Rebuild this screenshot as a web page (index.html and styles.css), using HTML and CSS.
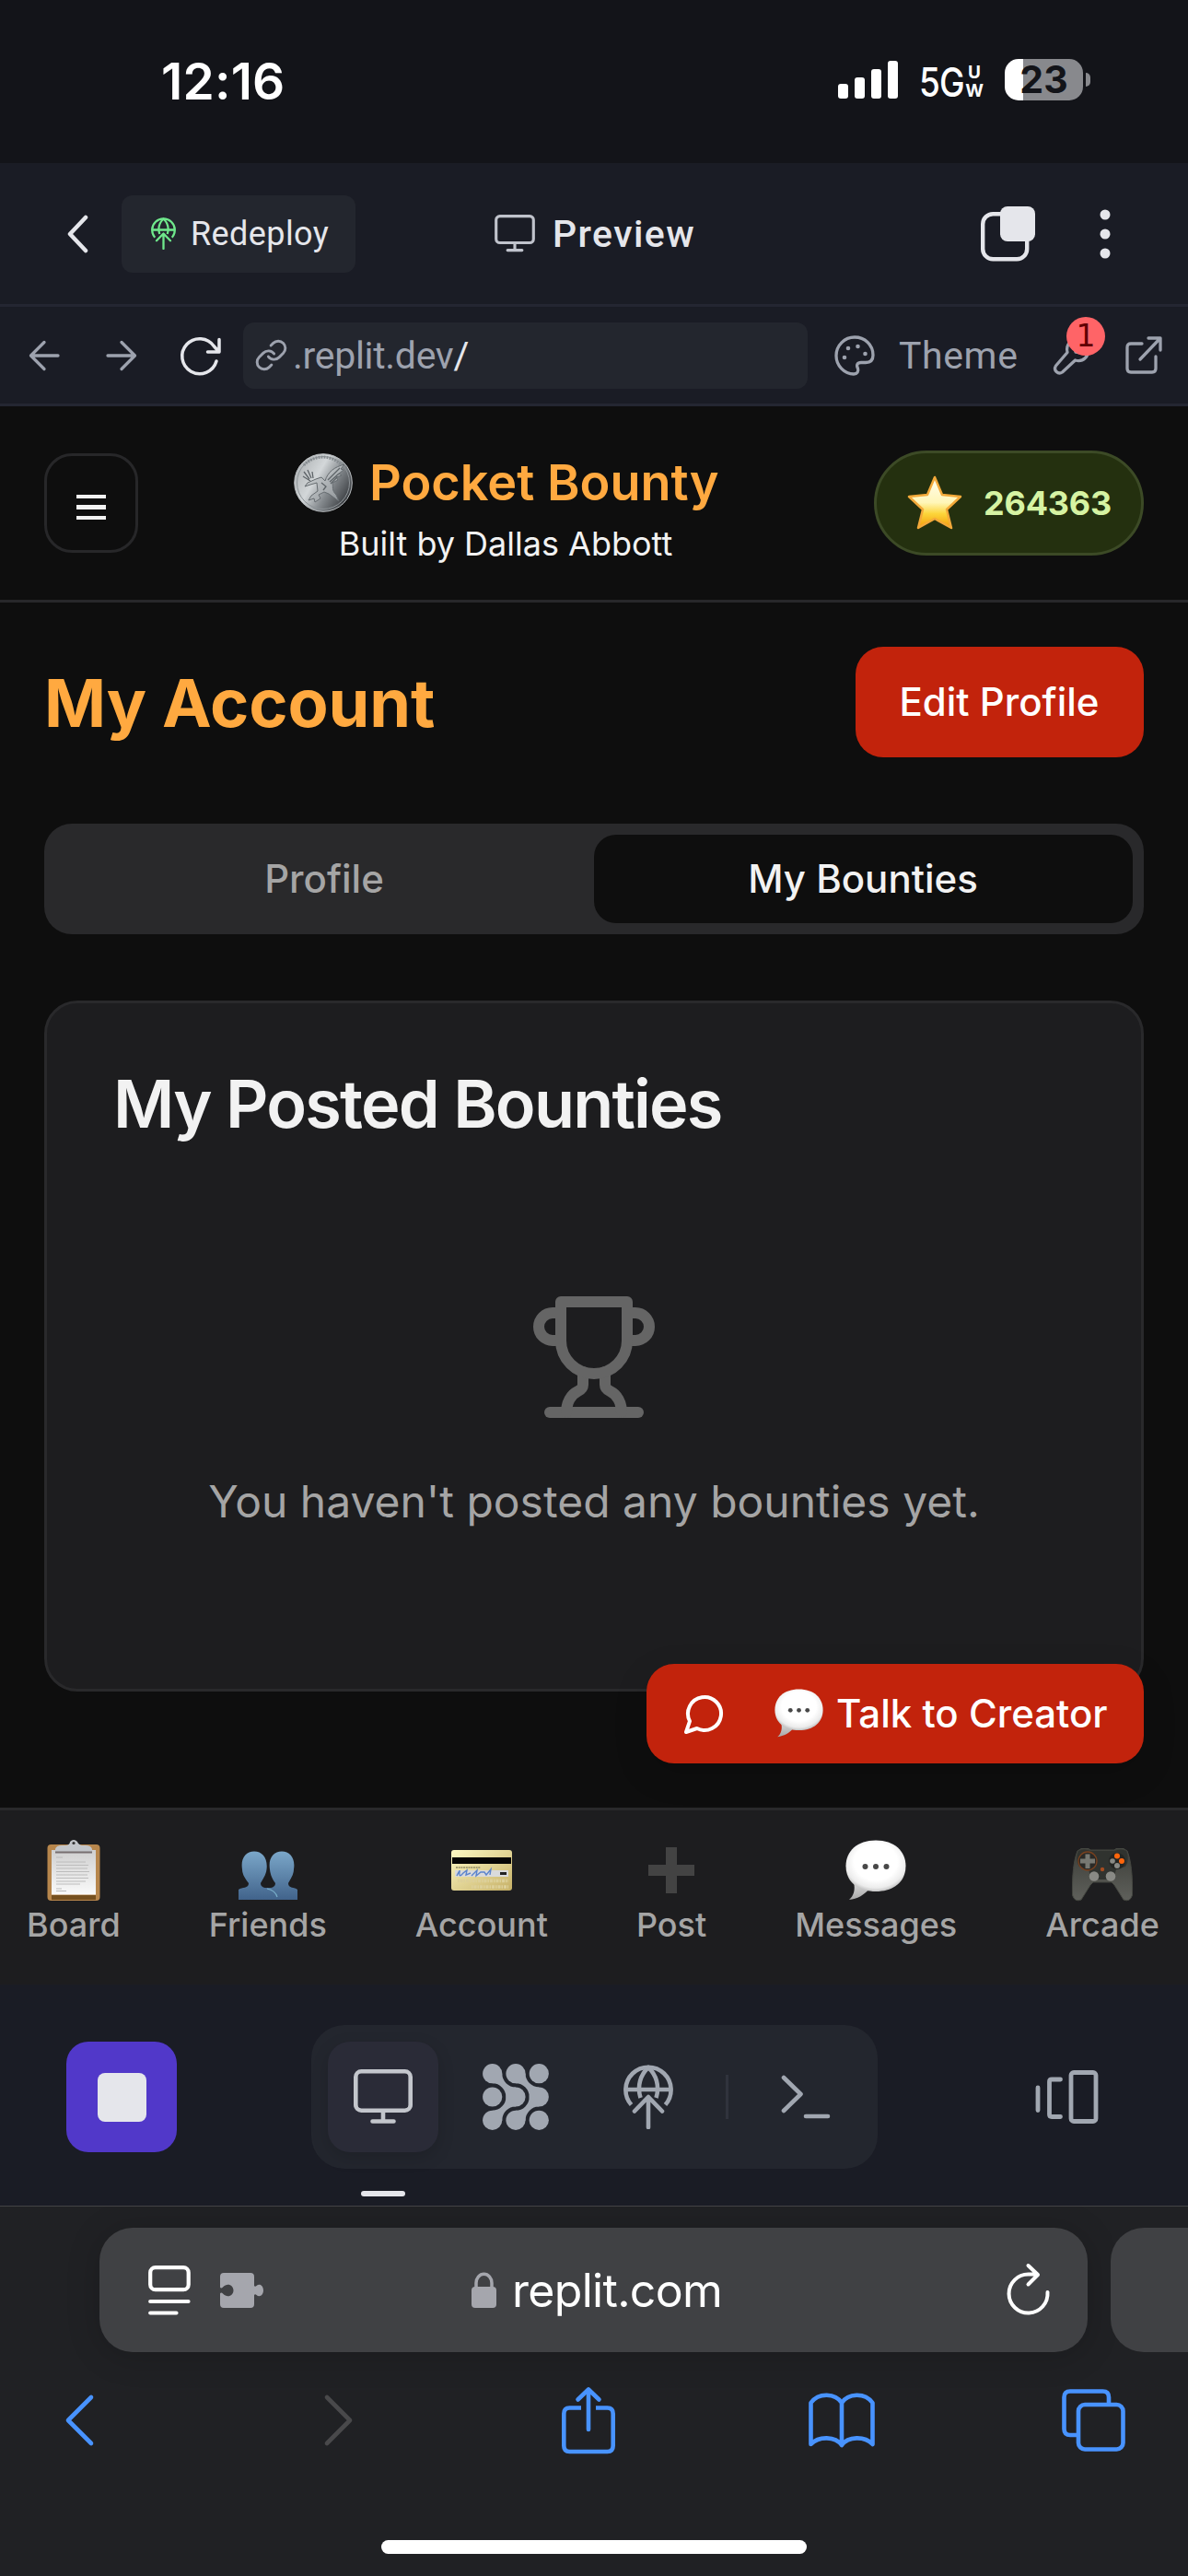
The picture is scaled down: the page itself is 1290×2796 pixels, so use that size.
FILE: index.html
```html
<!DOCTYPE html>
<html lang="en">
<head>
<meta charset="utf-8">
<title>Pocket Bounty</title>
<link rel="stylesheet" href="styles.css">
</head>
<body>
<svg class="defs" width="0" height="0" aria-hidden="true">
  <defs>
    <radialGradient id="bubbleFill" cx="50%" cy="42%" r="60%">
      <stop offset="0.6" stop-color="#fff"/><stop offset="0.85" stop-color="#ececec"/><stop offset="1" stop-color="#b9b9b9"/>
    </radialGradient>
    <linearGradient id="tailFill" x1="0" y1="0" x2="0" y2="1"><stop offset="0" stop-color="#d8d8d8"/><stop offset="1" stop-color="#a8a8a8"/></linearGradient>
    <linearGradient id="starFill" x1="0" y1="0" x2="0" y2="1"><stop offset="0" stop-color="#fffdf0"/><stop offset="0.5" stop-color="#fff6b8"/><stop offset="0.72" stop-color="#fcd53a"/><stop offset="1" stop-color="#f39a0b"/></linearGradient>
    <linearGradient id="coinFill" x1="0.1" y1="0.2" x2="0.95" y2="0.7"><stop offset="0" stop-color="#b4b8ba"/><stop offset="0.35" stop-color="#d3d7d9"/><stop offset="0.65" stop-color="#858a8e"/><stop offset="1" stop-color="#3e4145"/></linearGradient>
    <linearGradient id="eagleFill" x1="0" y1="0" x2="1" y2="1"><stop offset="0" stop-color="#d5d9db"/><stop offset="1" stop-color="#8c9195"/></linearGradient>
    <linearGradient id="peopleFill" x1="0" y1="0" x2="0" y2="1"><stop offset="0" stop-color="#7ba7c9"/><stop offset="1" stop-color="#41638b"/></linearGradient>
    <linearGradient id="paperFill" x1="0" y1="0" x2="0" y2="1"><stop offset="0" stop-color="#cfcfcf"/><stop offset="1" stop-color="#fafafa"/></linearGradient>
    <linearGradient id="cardFill" x1="0" y1="0" x2="1" y2="1"><stop offset="0" stop-color="#fdf9c4"/><stop offset="1" stop-color="#c6b066"/></linearGradient>
    <linearGradient id="padFill" x1="0" y1="0" x2="0" y2="1"><stop offset="0" stop-color="#3c3e39"/><stop offset="1" stop-color="#5f605b"/></linearGradient>
  </defs>
  <symbol id="globe-up" viewBox="0 0 54 70">
    <g fill="none" stroke="currentColor" stroke-width="4.6" stroke-linejoin="round">
      <path d="M8.5 43.5A24.6 24.6 0 1 1 45.5 43.5"/>
      <path d="M2.5 27H51.5M18.5 36C14.5 23 18.5 11 27 3C35.500 11 39.500 23 35.500 36"/>
      <path stroke-linecap="round" d="M27 68V35.500M12 50.500 27 35 42 50.500"/>
    </g>
  </symbol>
  <symbol id="monitor" viewBox="0 0 64 60">
    <g fill="none" stroke="currentColor" stroke-width="4.600" stroke-linecap="round">
      <rect x="2.300" y="2.300" width="59.400" height="42.400" rx="6"/><path d="M32 46V56M20.500 56.500H43.500"/>
    </g>
  </symbol>
  <symbol id="speech" viewBox="0 0 66 66">
    <path d="M9 46C11 54 9 61 4 65C13 64 20 60 25 54Z" fill="url(#tailFill)"/>
    <path d="M33 .5C53 .5 65.500 12 65.500 28.500C65.500 45 53 56 33 56C13 56 .5 45 .5 28.500C.5 12 13 .5 33 .5Z" fill="url(#bubbleFill)"/>
    <g fill="#484848"><circle cx="21.500" cy="29" r="3"/><circle cx="33" cy="29" r="3"/><circle cx="44.500" cy="29" r="3"/></g>
  </symbol>
</svg>

<div class="status">
  <span class="clock">12:16</span>
  <svg class="signal" viewBox="0 0 65 41" fill="#fff"><rect y="25" width="11" height="16" rx="3"/><rect x="18" y="18" width="11" height="23" rx="3"/><rect x="36" y="9" width="11" height="32" rx="3"/><rect x="54" width="11" height="41" rx="3"/></svg>
  <span class="network">5G</span>
  <span class="network-sub"><span>U</span><span>W</span></span>
  <div class="battery">23</div>
  <i class="battery-nub"></i>
</div>

<header class="workspace">
  <svg class="back" viewBox="0 0 24 42"><path d="M21 3 4 21 21 39" fill="none" stroke="#e5e6eb" stroke-width="4.500" stroke-linecap="round" stroke-linejoin="round"/></svg>
  <button class="redeploy"><svg class="redeploy-icon"><use href="#globe-up"/></svg><span>Redeploy</span></button>
  <svg class="preview-icon"><use href="#monitor"/></svg>
  <h1 class="preview">Preview</h1>
  <svg class="windows" viewBox="0 0 59 60"><rect x="2.200" y="8.200" width="48" height="49" rx="11" fill="none" stroke="#e5e6eb" stroke-width="4.400"/><rect x="21" width="38" height="38" rx="8" fill="#e5e6eb"/></svg>
  <svg class="dots" viewBox="0 0 12 54" fill="#e5e6eb"><circle cx="6" cy="6" r="5.500"/><circle cx="6" cy="27" r="5.500"/><circle cx="6" cy="48" r="5.500"/></svg>
</header>

<div class="urlbar">
  <svg class="nav-arrow" viewBox="0 0 34 34"><path d="M32 17H2.500M17 2.500 2.500 17 17 31.500"/></svg>
  <svg class="nav-arrow forward" viewBox="0 0 34 34"><path d="M2 17H31.500M17 2.500 31.500 17 17 31.500"/></svg>
  <svg class="refresh" viewBox="0 0 46 42"><path d="M40 27A19 19 0 1 1 37.500 11L43 17M43 3.500V17H30.500"/></svg>
  <div class="address">
    <svg class="link" viewBox="0 0 24 24"><path d="M10 13a5 5 0 0 0 7.540.54l3-3a5 5 0 0 0-7.070-7.070l-1.720 1.710"/><path d="M14 11a5 5 0 0 0-7.540-.54l-3 3a5 5 0 0 0 7.070 7.070l1.710-1.710"/></svg>
    <span>.replit.dev<b>/</b></span>
  </div>
  <svg class="palette" viewBox="0 0 44 44"><path d="M22 2C11 2 2 11 2 22C2 33 11 42 21 42C25 42 26.500 39 25.500 36C23.500 32 25 29.500 29 29.500H34C39 29.500 42 27 42 21.500C42 10 33 2 22 2Z"/><g><circle cx="15" cy="14" r="2.300"/><circle cx="25.500" cy="12" r="2.300"/><circle cx="33.500" cy="20" r="2.300"/><circle cx="11" cy="24" r="2.300"/></g></svg>
  <span class="theme">Theme</span>
  <div class="tools">
    <svg viewBox="0 0 42 42"><path d="M16 17.500C14 9 20 2 29 4L24 10 25 17 32 18 38 13C40 22 33 28.500 24.500 26L10.500 39C6 42 .5 37 3.500 32Z"/></svg>
    <span class="count">1</span>
  </div>
  <svg class="external" viewBox="0 0 40 41"><path d="M18 8H6Q2 8 2 12V35Q2 39 6 39H29Q33 39 33 35V22M16 25 38 2M25 2H38V15"/></svg>
</div>

<div class="app">
  <header class="app-header">
    <button class="menu"><i></i><i></i><i></i></button>
    <div class="brand">
      <div class="brand-row">
        <svg class="coin" viewBox="0 0 64 64"><circle cx="32" cy="32" r="31.300" fill="url(#coinFill)" stroke="#b9bdc0" stroke-width="1"/><circle cx="32" cy="32" r="28.500" fill="none" stroke="#8e9498" stroke-width="1"/><path d="M11 13A28 28 0 0 1 51 12" fill="none" stroke="#858b8f" stroke-width="3" stroke-dasharray="1.800 1.200"/><path d="M34 30C37 20 44 15 55 12L51 17 54 18 49 22 52 24 46 26 48 29 42 32C43 37 41 40 46 45L49 52 38 44 33 42 27 45 29 49 23 53 22 49 16 51 19 46 26 41 25 32 18 34 12 36 15 32 24 28 30 26Z" fill="url(#eagleFill)" stroke="#666c70" stroke-width="1"/><path d="M11 20 17 28M15 18 19 27M10 25 18 30M20 20 21 27M37 29 50 16M39 31 49 22M40 33 47 26M30 32 35 36 32 40" fill="none" stroke="#5e6468" stroke-width="1.300"/></svg>
        <h2>Pocket Bounty</h2>
      </div>
      <p>Built by Dallas Abbott</p>
    </div>
    <div class="points">
      <svg class="star" viewBox="0 0 62 62"><path d="M31 3 39 22 59 24 44 38 49 58 31 48 13 58 18 38 3 24 23 22Z" fill="url(#starFill)" stroke="#f3a93a" stroke-width="2.500" stroke-linejoin="round"/></svg>
      <span>264363</span>
    </div>
  </header>

  <main>
    <div class="title-row"><h2>My Account</h2><button class="edit">Edit Profile</button></div>
    <div class="tabs"><button>Profile</button><button class="active">My Bounties</button></div>
    <section class="card">
      <h3>My Posted Bounties</h3>
      <div class="empty">
        <svg viewBox="0 0 24 24"><path d="M6 9H4.500a2.500 2.500 0 0 1 0-5H6"/><path d="M18 9h1.500a2.500 2.500 0 0 0 0-5H18"/><path d="M4 22h16"/><path d="M10 14.660V17c0 .55-.47.980-.97 1.210C7.850 18.750 7 20.240 7 22"/><path d="M14 14.660V17c0 .55.470.980.970 1.210C16.150 18.750 17 20.240 17 22"/><path d="M18 2H6v7a6 6 0 0 0 12 0V2Z"/></svg>
        <p>You haven't posted any bounties yet.</p>
      </div>
    </section>
    <button class="talk">
      <svg class="chat" viewBox="0 0 24 24"><path d="M7.900 20A9 9 0 1 0 4 16.100L2 22Z"/></svg>
      <svg class="chat-emoji"><use href="#speech"/></svg>
      <span>Talk to Creator</span>
    </button>
  </main>

  <nav class="app-nav">
    <a><svg viewBox="0 0 66 66"><rect x="4.500" y="5" width="57" height="61" rx="4" fill="#b7864c"/><rect x="9" y="60" width="48" height="5" fill="#76501f"/><rect x="9" y="11" width="48" height="48.500" fill="url(#paperFill)"/><path d="M13 13V10Q14 6 20 6H25Q29 5 29 2Q33-2 37 2Q38 5 42 6H46Q52 6 53 10V13Z" fill="#c3c6ca"/><path d="M13 13.500H53" stroke="#776f70" stroke-width="2"/><circle cx="33" cy="3.500" r="1.600" fill="#333"/><path d="M14 19H21M14 24H46M14 27.500H49M14 31H48M14 34.500H50M14 38H48M14 41.500H49M14 45H46M14 48H40M14 53H20M14 55.500H25" stroke="#bcbcbc" stroke-width="1"/></svg><span>Board</span></a>
    <a><svg viewBox="0 0 66 66"><path d="M1 65V54C5 51 12 53 12 47C9 43 5 38 5 32C3 20 9 12.500 18 12.500C27 12.500 33 20 31.500 32C31 38 27 43 25 47C25 53 33 52 33 52C33 52 41 53 41 47C38 43 35.500 38 35 32C33 20 39 12.500 48 12.500C57 12.500 63 20 61 32C61 38 57 43 55 47C55 53 62 51 65 54V65Z" fill="url(#peopleFill)"/><path d="M32 53Q41 55 43 62" fill="none" stroke="#79afc9" stroke-width="1.200"/></svg><span>Friends</span></a>
    <a><svg viewBox="0 0 66 66"><rect y="11" width="66" height="44" rx="3" fill="url(#cardFill)"/><rect x="1" y="19" width="64" height="7" fill="#050505"/><rect x="4" y="33" width="58" height="7" fill="#d9dadb"/><path d="M5 30H32" stroke="#8f8961" stroke-width="1.500" stroke-dasharray="2 .7"/><path d="M6 39Q10 31 9 35Q8 42 13 36L17 33 16 38 21 36M22 39 28 33 27 39 32 35 36 35 38 38 43 32 42 38" fill="none" stroke="#5b84cc" stroke-width="1.400"/><path d="M53 36.500H60" stroke="#222" stroke-width="3"/><path d="M7 44.500H62M22 51H62" stroke="#ddd09a" stroke-width="3.500" stroke-dasharray="1.500 1 3 1"/></svg><span>Account</span></a>
    <a><svg viewBox="0 0 66 66"><path d="M27 8H39V27H58V39H39V58H27V39H8V27H27Z" fill="#434343"/></svg><span>Post</span></a>
    <a><svg><use href="#speech"/></svg><span>Messages</span></a>
    <a><svg viewBox="0 0 66 66"><path d="M6 12 10 9.500H18L20 11H46L48 9.500H56L60 12C64 22 66 38 65.500 60Q63 68 56 65L46 49 43 46H23L20 49 10 65Q3 68 .5 60C0 38 2 22 6 12Z" fill="url(#padFill)" stroke="#454741" stroke-width="1"/><path d="M7 12Q13 9 20 12H46Q53 9 59 12Q63 22 58 29L48 32 45 43H21L18 32 8 29Q3 22 7 12Z" fill="#30332f"/><circle cx="17" cy="23" r="10" fill="#2a2a27" stroke="#77401f" stroke-width="1.300"/><path d="M14.500 15.500H19.500V20.500H25V25.500H19.500V31H14.500V25.500H9V20.500H14.500Z" fill="#777872"/><circle cx="49" cy="23" r="9" fill="#242522"/><circle cx="49" cy="17.500" r="3" fill="#ff650b"/><circle cx="54" cy="23" r="3" fill="#ff650b"/><g fill="#898a85"><circle cx="44" cy="23" r="2.800"/><circle cx="49" cy="28" r="3"/><circle cx="24" cy="39.500" r="5.300"/><circle cx="42" cy="39.500" r="5.300"/></g><circle cx="33" cy="32" r="2.200" fill="#a44c20"/></svg><span>Arcade</span></a>
  </nav>
</div>

<div class="dock">
  <button class="stop"><i></i></button>
  <div class="dock-group">
    <div class="dock-active"><svg><use href="#monitor"/></svg></div>
    <svg class="agent" viewBox="0 0 72 72" fill="#a1a7b1"><path d="M21.300 10.800A14.700 14.700 0 0 0 36 25.400V36H25.400A14.700 14.700 0 0 0 10.800 21.300V10.800ZM46.600 10.800A14.700 14.700 0 0 0 61.200 25.400V36H50.700A14.700 14.700 0 0 0 36 21.300V10.800ZM21.300 61.200A14.700 14.700 0 0 1 36 46.600V36H25.400A14.700 14.700 0 0 1 10.800 50.700V61.200ZM46.600 61.200A14.700 14.700 0 0 1 61.200 46.600V36H50.700A14.700 14.700 0 0 1 36 50.700V61.200Z"/><circle cx="10.700" cy="10.700" r="10.600"/><circle cx="36" cy="10.700" r="10.600"/><circle cx="61.300" cy="10.700" r="10.600"/><circle cx="10.700" cy="36" r="10.600"/><circle cx="36" cy="36" r="10.600"/><circle cx="61.300" cy="36" r="10.600"/><circle cx="10.700" cy="61.300" r="10.600"/><circle cx="36" cy="61.300" r="10.600"/><circle cx="61.300" cy="61.300" r="10.600"/></svg>
    <svg class="deploy"><use href="#globe-up"/></svg>
    <i class="divider"></i>
    <svg class="shell" viewBox="0 0 54 48"><path d="M3 3 21.500 21 3 39M27 45H51"/></svg>
  </div>
  <svg class="devices" viewBox="0 0 69 58"><path d="M3 19V43.500M27.500 10H18Q15.500 10 15.500 12.500V48Q15.500 50.500 18 50.500H27.500"/><rect x="39" y="2.500" width="27" height="53" rx="3"/></svg>
  <i class="indicator"></i>
</div>

<footer class="browser">
  <div class="pages">
    <div class="page-address">
      <svg class="page-settings" viewBox="0 0 46 54"><g fill="none" stroke="#fff" stroke-width="4.200" stroke-linecap="round"><rect x="2.200" y="2.200" width="41.500" height="24" rx="5.500"/><path d="M2.200 39H43.500M2.200 51.500H30.500"/></g></svg>
      <svg class="puzzle" viewBox="0 0 47 38"><path fill="#a5a6ad" d="M4 0H33Q37 0 37 4V14Q38 15.500 39.500 14C43 11 47 14 47 19S43 27 39.500 24Q38 22.500 37 24V34Q37 38 33 38H4Q0 38 0 34V22.500Q1 20.500 3 22.500C8 28 14.500 24.500 14.500 19S8 10 3 15.500Q1 17.500 0 15.500V4Q0 0 4 0Z"/></svg>
      <svg class="lock" viewBox="0 0 27 39"><path d="M5 20V12A8.500 9.800 0 0 1 22 12V20" fill="none" stroke="#a5a6ad" stroke-width="3.500"/><rect y="16" width="27" height="23" rx="4" fill="#a5a6ad"/></svg>
      <span>replit.com</span>
      <svg class="page-reload" viewBox="0 0 46 55"><path d="M43.500 32A21 21 0 1 1 23 12.500H32M22.500 3 33 13 22.500 23.500"/></svg>
    </div>
    <div class="next-page"></div>
  </div>
  <div class="controls">
    <svg class="go-back" viewBox="0 0 34 58"><path d="M30 4 5 29 30 54"/></svg>
    <svg class="go-forward" viewBox="0 0 34 58"><path d="M4 4 29 29 4 54"/></svg>
    <svg class="share" viewBox="0 0 58 73"><path d="M21 22.500H8.500Q2.300 22.500 2.300 29V63.500Q2.300 70 8.500 70H49.500Q55.700 70 55.700 63.500V29Q55.700 22.500 49.500 22.500H37" stroke-linecap="butt"/><path d="M29 46V3M17.500 13.500 29 2.500 40.500 13.500"/></svg>
    <svg class="bookmarks" viewBox="0 0 72 61"><path d="M36 11C29 .5 11-.5 2.500 11V56C11 47 29 47 36 57C43 47 61 47 69.500 56V11C61-.5 43 .5 36 11ZM36 11V57"/></svg>
    <svg class="all-tabs" viewBox="0 0 69 68"><path d="M16 50H9Q2.500 50 2.500 43.500V9Q2.500 2.500 9 2.500H44.500Q51 2.500 51 9V16" stroke-linecap="butt"/><rect x="18" y="17" width="48.500" height="48.500" rx="7"/></svg>
  </div>
  <i class="home"></i>
</footer>
</body>
</html>
```
FILE: styles.css
```css
* { box-sizing: border-box; margin: 0; padding: 0; }
body { width: 1290px; height: 2796px; overflow: hidden; background: #0e0e0e; font-family: Inter, "Liberation Sans", sans-serif; color: #f2f2f2; white-space: nowrap; }
button { border: 0; background: none; color: inherit; font: inherit; }
svg { display: block; flex: none; overflow: visible; }
.defs { position: absolute; }
i { display: block; flex: none; }

/* Phone status bar */
.status { height: 177px; background: #131419; display: flex; align-items: center; color: #fff; }
.clock { flex: none; width: 739px; margin: -2px 0 0 175px; font-size: 55px; font-weight: 600; letter-spacing: .2px; }
.signal { width: 65px; height: 41px; margin-left: -4px; margin-top: -4px; }
.network { flex: none; width: 49px; margin-left: 23px; font-size: 44px; font-weight: 500; letter-spacing: -1px; transform: scaleX(.84); transform-origin: left; }
.network-sub { flex: none; width: 20px; margin-left: 1px; display: grid; font-size: 19px; font-weight: 700; line-height: 19.500px; text-align: center; justify-items: center; }
.battery { flex: none; width: 85px; height: 45px; margin-left: 23px; margin-top: -4px; border-radius: 15px; background: linear-gradient(90deg, #fff 20px, #88898d 20px); color: #131419; font-size: 41px; font-weight: 700; line-height: 45px; text-align: center; }
.battery-nub { width: 5px; height: 15px; margin-left: 3px; margin-top: -4px; border-radius: 0 5px 5px 0; background: #88898d; }

/* Workspace header */
.workspace { height: 156px; background: #1a1c25; border-bottom: 3px solid #242632; display: flex; align-items: center; font-family: Roboto, "Liberation Sans", sans-serif; color: #e5e6eb; }
.back { width: 24px; height: 42px; margin-left: 72px; }
.redeploy { width: 254px; height: 84px; margin-left: 36px; border-radius: 12px; background: #23262e; display: flex; align-items: center; padding-left: 32px; font-size: 36px; letter-spacing: .4px; }
.redeploy-icon { width: 27px; height: 35px; color: #6fe88c; margin-right: 16px; }
.preview-icon { width: 44px; height: 41px; margin-left: 151px; color: #c0c3cc; }
.preview { width: 465px; margin-left: 19px; font-size: 41px; font-weight: 500; letter-spacing: 1.400px; }
.windows { width: 59px; height: 60px; }
.dots { width: 12px; height: 54px; margin-left: 70px; }

/* Preview address row */
.urlbar { height: 108px; background: #1a1c25; border-bottom: 3px solid #242632; display: flex; align-items: center; color: #9da2ae; font-family: Roboto, "Liberation Sans", sans-serif; font-size: 41px; }
.urlbar svg { fill: none; stroke: #9da2ae; stroke-width: 3.300; stroke-linecap: round; stroke-linejoin: round; }
.nav-arrow { width: 34px; height: 34px; margin-left: 31px; }
.forward { margin-left: 50px; }
.urlbar .refresh { width: 46px; height: 42px; margin-left: 46px; stroke: #e5e6eb; stroke-width: 3.500; }
.address { width: 613px; height: 72px; margin-left: 23px; border-radius: 12px; background: #23262e; display: flex; align-items: center; letter-spacing: -.3px; }
.address .link { width: 37px; height: 37px; margin: 0 5px 0 12px; stroke-width: 1.900; }
.address b { color: #e5e6eb; font-weight: 400; }
.palette { width: 44px; height: 44px; margin-left: 29px; }
.urlbar .palette g { fill: #9da2ae; stroke: none; }
.theme { width: 129px; margin-left: 26px; letter-spacing: .6px; }
.tools { position: relative; margin-left: 38px; }
.tools svg { width: 42px; height: 42px; }
.count { position: absolute; left: 15px; top: -21px; width: 42px; height: 42px; border-radius: 50%; background: #ff6467; color: #5f0003; font: 33px/42px "DejaVu Sans", sans-serif; text-align: center; }
.external { width: 40px; height: 41px; margin-left: 37px; }

/* Pocket Bounty header */
.app-header { height: 213px; border-bottom: 3px solid #28282a; display: flex; padding: 48px 48px 0; }
.menu { width: 102px; height: 108px; margin-top: 3px; border: 3px solid #272729; border-radius: 30px; display: flex; flex-direction: column; align-items: center; justify-content: center; gap: 7px; padding-top: 9px; }
.menu i { width: 32px; height: 4.500px; background: #f2f2f2; }
.brand { width: 460px; margin-left: 169px; text-align: center; }
.brand-row { display: flex; align-items: center; height: 70px; }
.coin { width: 64px; height: 64px; margin-right: 18px; }
.brand h2 { margin-top: -2px; color: #ffa940; font-size: 54px; font-weight: 600; }
.brand p { margin-top: 8px; font-size: 36px; line-height: 46px; }
.points { width: 293px; height: 114px; margin-left: auto; border: 3px solid #3c4a26; border-radius: 57px; background: #24300f; display: flex; align-items: center; padding: 0 0 1px 32px; color: #d6f3a3; font-size: 36px; font-weight: 700; letter-spacing: -.2px; }
.star { width: 62px; height: 62px; margin-right: 22px; }

/* Account page */
main { height: 1308px; padding: 48px 48px 0; }
.title-row { display: flex; justify-content: space-between; align-items: center; height: 120px; }
.title-row h2 { font-size: 72px; font-weight: 700; letter-spacing: -.1px; color: #ffa940; }
.edit { width: 313px; height: 120px; padding: 0 1px 2px 0; border-radius: 30px; background: #c2230c; color: #fff; font-size: 42px; font-weight: 500; }
.tabs { display: grid; grid-template-columns: 1fr 1fr; height: 120px; margin-top: 72px; padding: 12px; border-radius: 30px; background: #29292b; font-size: 42px; font-weight: 500; color: #a5a5a5; }
.tabs button { padding: 0 1px 1px 0; }
.tabs .active { background: #0e0e0e; border-radius: 24px; color: #f2f2f2; }
.card { height: 750px; margin-top: 72px; border: 3px solid #29292b; border-radius: 36px; background: #1d1d1f; padding: 73px 72px; }
.card h3 { font-size: 72px; line-height: 72px; font-weight: 600; letter-spacing: -1.800px; }
.empty { margin-top: 167px; display: flex; flex-direction: column; align-items: center; }
.empty svg { width: 144px; height: 144px; fill: none; stroke: #656565; stroke-width: 2; stroke-linecap: round; stroke-linejoin: round; }
.empty p { margin-top: 49px; font-size: 48px; line-height: 72px; color: #a5a5a5; }
.talk { position: absolute; left: 702px; top: 1806px; width: 540px; height: 108px; border-radius: 30px; background: #c2230c; color: #fff; box-shadow: 0 12px 36px rgba(0,0,0,.15); display: flex; align-items: center; padding: 0 0 1px 39px; font-size: 42px; font-weight: 500; }
.chat { width: 48px; height: 48px; fill: none; stroke: #fff; stroke-width: 2; stroke-linecap: round; stroke-linejoin: round; }
.chat-emoji { width: 53px; height: 53px; margin: 0 14px 0 52px; }

/* App navigation */
.app-nav { height: 192px; background: #1d1d1f; border-top: 3px solid #29292b; display: flex; justify-content: space-between; padding: 32px 31px 0 29px; font-size: 36px; font-weight: 500; line-height: 44px; color: #a5a5a5; }
.app-nav a { display: flex; flex-direction: column; align-items: center; gap: 4px; }
.app-nav svg { width: 66px; height: 66px; }

/* Workspace tool dock */
.dock { position: relative; height: 240px; background: #1a1c25; display: flex; padding: 44px 0 0 72px; }
.stop { width: 120px; height: 120px; margin-top: 18px; border-radius: 24px; background: #5138c9; display: grid; place-items: center; }
.stop i { width: 53px; height: 53px; border-radius: 8px; background: #e5e6eb; }
.dock-group { width: 615px; height: 156px; margin-left: 146px; border-radius: 36px; background: #23262e; display: flex; align-items: center; padding-left: 18px; color: #a1a7b1; }
.dock-active { width: 120px; height: 120px; border-radius: 24px; background: #2a2b37; box-shadow: 0 6px 18px rgba(0,0,0,.15); display: grid; place-items: center; color: #c3c6cc; }
.dock-active svg { width: 64px; height: 60px; }
.agent { width: 72px; height: 72px; margin-left: 48px; }
.deploy { width: 54px; height: 70px; margin-left: 81px; }
.divider { width: 3px; height: 48px; margin-left: 57px; background: #30333d; }
.shell { width: 54px; height: 48px; margin-left: 57px; fill: none; stroke: #a1a7b1; stroke-width: 4.600; stroke-linecap: round; stroke-linejoin: round; }
.devices { width: 69px; height: 58px; margin: 49px 0 0 171px; fill: none; stroke: #a1a7b1; stroke-width: 4.800; stroke-linecap: round; stroke-linejoin: round; }
.indicator { position: absolute; left: 392px; bottom: 10px; width: 48px; height: 6px; border-radius: 3px; background: #e5e6eb; }

/* Browser toolbar */
.browser { height: 402px; background: #202124; border-top: 1px solid #434346; overflow: hidden; }
.pages { display: flex; gap: 25px; margin: 23px 0 0 108px; }
.page-address { flex: none; width: 1073px; height: 135px; border-radius: 36px; background: #404144; box-shadow: 0 4px 36px rgba(0,0,0,.18); display: flex; align-items: center; color: #fff; font-size: 50px; letter-spacing: -.7px; }
.next-page { flex: none; width: 140px; height: 135px; border-radius: 36px; background: #404144; }
.page-settings { width: 46px; height: 54px; margin-left: 53px; }
.puzzle { width: 47px; height: 38px; margin-left: 32px; }
.lock { width: 27px; height: 39px; margin: 0 17px 0 226px; }
.page-address span { flex: none; width: 228px; }
.page-reload { width: 46px; height: 55px; margin: -4px 0 0 310px; fill: none; stroke: #fff; stroke-width: 4; stroke-linecap: round; stroke-linejoin: round; }
.controls { display: flex; align-items: center; height: 74px; margin-top: 37px; padding-left: 69px; fill: none; stroke: #4893ff; stroke-width: 4.600; stroke-linecap: round; stroke-linejoin: round; }
.go-back, .go-forward { width: 34px; height: 58px; }
.go-forward { margin-left: 248px; stroke: #49494b; }
.share { width: 58px; height: 73px; margin-left: 225px; }
.bookmarks { width: 72px; height: 61px; margin-left: 210px; }
.all-tabs { width: 69px; height: 68px; margin-left: 203px; }
.home { width: 462px; height: 15px; margin: 93px auto 0; border-radius: 8px; background: #fff; }
```
